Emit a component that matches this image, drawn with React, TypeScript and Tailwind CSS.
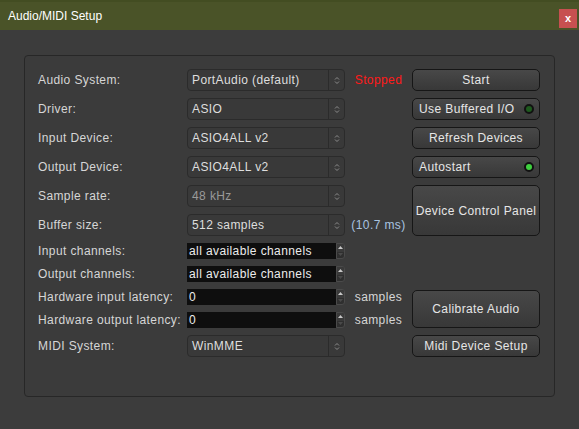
import React from "react";

const font = "font-['Liberation_Sans',Arial,sans-serif]";

const ComboArrows = () => (
  <svg width="6" height="9" viewBox="0 0 6 9" className="text-[#8c8c8c]">
    <path d="M1 3.5 L3 1.5 L5 3.5" fill="none" stroke="currentColor" strokeWidth="1" />
    <path d="M1 5.5 L3 7.5 L5 5.5" fill="none" stroke="currentColor" strokeWidth="1" />
  </svg>
);

const Combo = ({ value, disabled }: { value: string; disabled?: boolean }) => (
  <div className="flex h-full items-stretch rounded-[4px] border border-[#2b2b2b] bg-[#393939]">
    <span
      className={`flex flex-1 items-center pl-[4px] ${disabled ? "text-[#9a9a9a]" : "text-[#dedede]"}`}
    >
      {value}
    </span>
    <span className="flex w-[16px] items-center justify-center border-l border-[#2b2b2b]">
      <ComboArrows />
    </span>
  </div>
);

const SpinField = ({ value }: { value: string }) => (
  <div className="flex h-full items-stretch">
    <span className="flex flex-1 items-center bg-[#0e0e0e] pl-[2px] text-[#ececec]">{value}</span>
    <span className="flex w-[9px] flex-col overflow-hidden rounded-r-[3px] border border-[#4a4a4a] bg-[#2f2f2f]">
      <span className="flex flex-1 items-center justify-center border-b border-[#3a3a3a] bg-[#3a3a3a]">
        <svg width="5" height="3" viewBox="0 0 5 3">
          <path d="M0 3 L2.5 0 L5 3 Z" fill="#c8c8c8" />
        </svg>
      </span>
      <span className="flex flex-1 items-center justify-center">
        <svg width="5" height="3" viewBox="0 0 5 3">
          <path d="M0 0 L2.5 3 L5 0 Z" fill="#4a4a4a" />
        </svg>
      </span>
    </span>
  </div>
);

const Button = ({
  children,
  className = "",
}: {
  children: React.ReactNode;
  className?: string;
}) => (
  <div
    className={`flex items-center rounded-[5px] border border-[#161616] bg-gradient-to-b from-[#484848] to-[#383838] text-[#e6e6e6] ${className}`}
  >
    {children}
  </div>
);

const Led = ({ on }: { on: boolean }) => (
  <span
    className={`mr-[5px] ml-auto h-[10px] w-[10px] rounded-full border-2 border-[#111] ${on ? "bg-[#3fd13f]" : "bg-[#1e5a1e]"}`}
  />
);

const Label = ({ children }: { children: React.ReactNode }) => (
  <span className="flex items-center text-[#d6d6d6]">{children}</span>
);

const Extra = ({ children, className = "" }: { children?: React.ReactNode; className?: string }) => (
  <span className={`flex items-center justify-center ${className}`}>{children}</span>
);

export default function App() {
  return (
    <div className={`h-[429px] w-[579px] overflow-hidden bg-[#3c3c3c] ${font} text-[12px] tracking-[0.4px]`}>
      <div className="flex h-[30px] items-center justify-between border-t-2 border-[#434d22] bg-[#4a5328] pr-[2px] pl-[8px]">
        <span className="pb-[1px] tracking-normal text-white">Audio/MIDI Setup</span>
        <span className="mt-[4px] flex h-[19px] w-[18px] items-center justify-center bg-[#c75050] text-[11px] font-bold tracking-normal text-white">
          x
        </span>
      </div>

      <div className="mt-[25px] ml-[24px] h-[342px] w-[531px] rounded-[4px] border border-[#272727] bg-[#3b3b3b] px-[13px] pt-[13px]">
        <div className="grid grid-cols-[149px_158px_67px_128px] grid-rows-[22px_22px_22px_22px_22px_22px_16px_16px_16px_16px_22px] gap-y-[7px]">
          <Label>Audio System:</Label>
          <Combo value="PortAudio (default)" />
          <Extra className="text-[#ff1a1a]">Stopped</Extra>
          <Button className="justify-center">Start</Button>

          <Label>Driver:</Label>
          <Combo value="ASIO" />
          <Extra />
          <Button className="pl-[6px]">
            Use Buffered I/O
            <Led on={false} />
          </Button>

          <Label>Input Device:</Label>
          <Combo value="ASIO4ALL v2" />
          <Extra />
          <Button className="justify-center">Refresh Devices</Button>

          <Label>Output Device:</Label>
          <Combo value="ASIO4ALL v2" />
          <Extra />
          <Button className="pl-[6px]">
            Autostart
            <Led on />
          </Button>

          <Label>Sample rate:</Label>
          <Combo value="48 kHz" disabled />
          <Extra />
          <Button className="row-span-2 justify-center">Device Control Panel</Button>

          <Label>Buffer size:</Label>
          <Combo value="512 samples" />
          <Extra className="text-[#a9c4e0]">(10.7 ms)</Extra>

          <Label>Input channels:</Label>
          <div className="col-span-3">
            <div className="h-full w-[158px]">
              <SpinField value="all available channels" />
            </div>
          </div>

          <Label>Output channels:</Label>
          <div className="col-span-3">
            <div className="h-full w-[158px]">
              <SpinField value="all available channels" />
            </div>
          </div>

          <Label>Hardware input latency:</Label>
          <SpinField value="0" />
          <Extra className="text-[#d6d6d6]">samples</Extra>
          <Button className="row-span-2 mt-[1px] justify-center">Calibrate Audio</Button>

          <Label>Hardware output latency:</Label>
          <SpinField value="0" />
          <Extra className="text-[#d6d6d6]">samples</Extra>

          <Label>MIDI System:</Label>
          <Combo value="WinMME" />
          <Extra />
          <Button className="justify-center">Midi Device Setup</Button>
        </div>
      </div>
    </div>
  );
}
